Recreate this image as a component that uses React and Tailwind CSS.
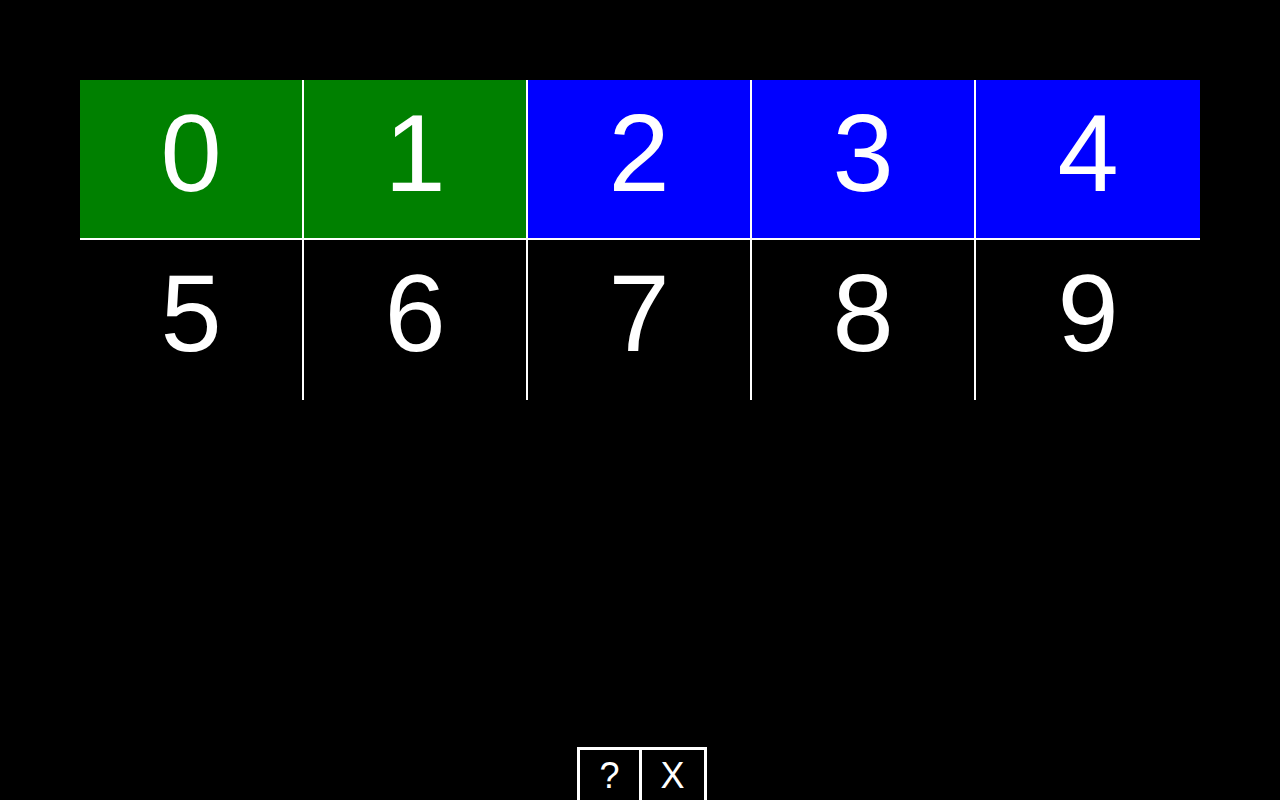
const cells = [
  { n: "0", bg: "bg-[#008000]" },
  { n: "1", bg: "bg-[#008000]" },
  { n: "2", bg: "bg-[#0000ff]" },
  { n: "3", bg: "bg-[#0000ff]" },
  { n: "4", bg: "bg-[#0000ff]" },
  { n: "5", bg: "bg-black" },
  { n: "6", bg: "bg-black" },
  { n: "7", bg: "bg-black" },
  { n: "8", bg: "bg-black" },
  { n: "9", bg: "bg-black" },
];

export default function App() {
  return (
    <div
      className="h-screen w-full bg-black text-white flex flex-col overflow-hidden"
      style={{ fontFamily: '"Liberation Sans", Arial, sans-serif' }}
    >
      <div className="mt-[80px] mx-[80px] grid grid-cols-5">
        {cells.map((c, i) => (
          <div
            key={c.n}
            className={
              "h-[160px] text-center text-[110px] leading-[146px] border-white " +
              c.bg +
              (i % 5 !== 4 ? " border-r-2" : "") +
              (i < 5 ? " border-b-2" : "")
            }
          >
            {c.n}
          </div>
        ))}
      </div>

      <div className="flex-1" />

      <div className="flex justify-center pl-1">
        <div className="flex h-[53px] border-[3px] border-b-0 border-white text-[36px] leading-[39px]">
          <button className="px-[19px] border-r-[3px] border-white">?</button>
          <button className="px-[19px]">X</button>
        </div>
      </div>
    </div>
  );
}
